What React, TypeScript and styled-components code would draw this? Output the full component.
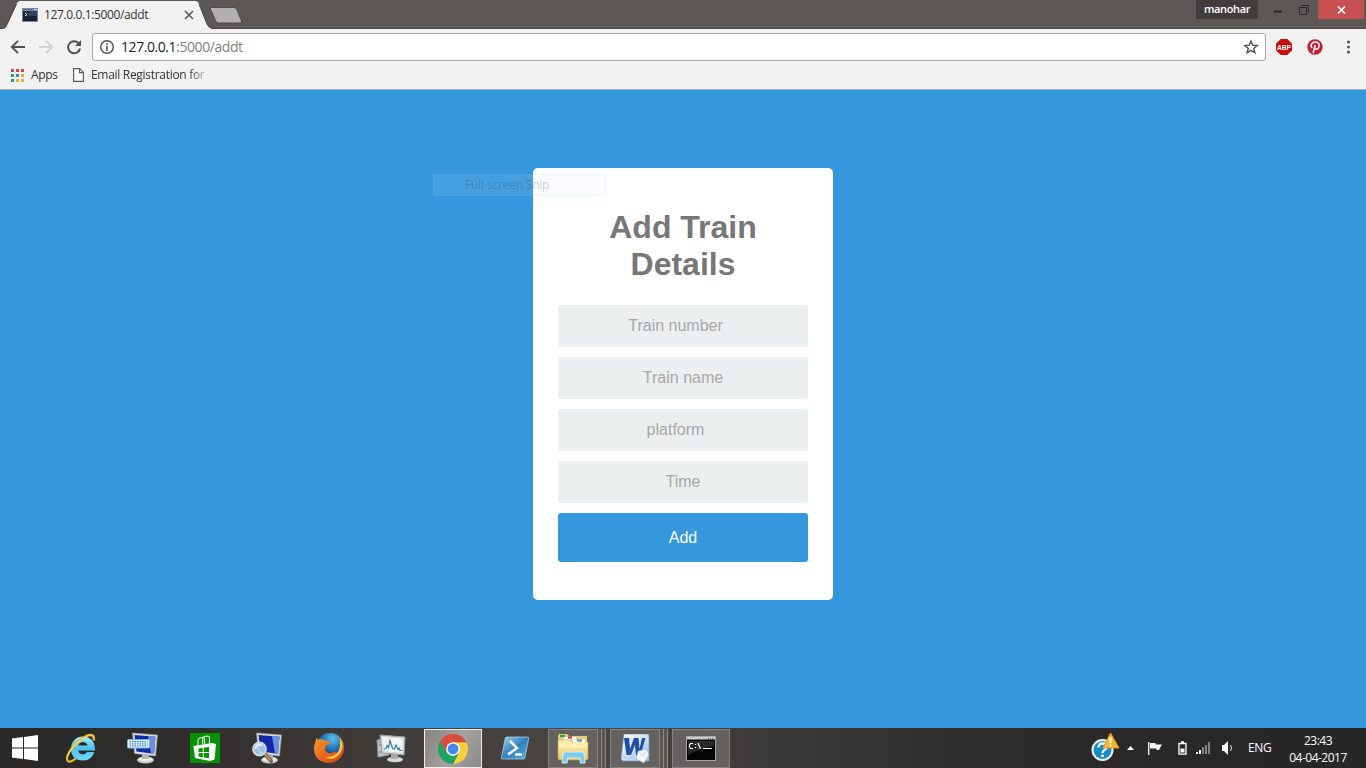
import React from 'react';
import styled, { createGlobalStyle } from 'styled-components';

const ui = `"Open Sans", "Noto Sans", sans-serif`;
const arial = `"Liberation Sans", Arial, sans-serif`;

const GlobalStyle = createGlobalStyle`
  *, *::before, *::after { box-sizing: border-box; }
  html, body { margin: 0; padding: 0; }
  body { width: 1366px; height: 768px; overflow: hidden; background: #3598dc; }
  svg { display: block; flex: none; }
`;

const Screen = styled.div`
  width: 1366px;
  height: 768px;
  display: flex;
  flex-direction: column;
`;

/* Browser window */

const TitleBar = styled.header`
  height: 29px;
  flex: none;
  display: flex;
  align-items: flex-start;
  background: #5b5856;
  box-shadow: inset 0 -1px #474443;
`;

const Tab = styled.div`
  width: 208px;
  height: 29px;
  position: relative;
  display: flex;
  align-items: center;
  padding-left: 22px;
`;

const TabShape = styled.svg`
  position: absolute;
  left: 0;
  top: 0;
`;

const TabIcon = styled.svg`
  position: relative;
`;

const Label = styled.span<{ $size?: number; $spacing?: number; $color?: string; $weight?: number }>`
  font-family: ${ui};
  font-size: ${p => p.$size ?? 12}px;
  font-weight: ${p => p.$weight ?? 400};
  letter-spacing: ${p => p.$spacing ?? 0}px;
  color: ${p => p.$color ?? '#333'};
  line-height: 18px;
  white-space: nowrap;
`;

const TabTitle = styled(Label)`
  position: relative;
  width: 139px;
  margin-left: 6px;
`;

const WindowControls = styled.div`
  margin-left: auto;
  display: flex;
  height: 19px;
`;

const UserBadge = styled.div`
  width: 62px;
  height: 19px;
  margin-right: 8px;
  display: flex;
  justify-content: center;
  background: #403d3c;
`;

const WindowButton = styled.div<{ $width: number; $close?: boolean }>`
  width: ${p => p.$width}px;
  height: 19px;
  display: flex;
  align-items: center;
  justify-content: center;
  background: ${p => (p.$close ? '#c75050' : 'transparent')};
`;

const Toolbar = styled.div`
  height: 36px;
  flex: none;
  display: flex;
  align-items: center;
  padding-left: 10px;
  background: #f2f2f2;
`;

const NavButtons = styled.div`
  width: 82px;
  display: flex;
  gap: 12px;
`;

const AddressBar = styled.div`
  width: 1174px;
  height: 28px;
  display: flex;
  align-items: center;
  padding: 0 6px;
  background: #fff;
  border: 1px solid #a9a9a9;
  border-radius: 3px;
`;

const Url = styled(Label)`
  flex: 1;
  margin-left: 6px;
`;

const UrlPath = styled.span`
  color: #808080;
`;

const Extensions = styled.div`
  display: flex;
  align-items: center;
  gap: 15px;
  margin-left: 10px;
`;

const BookmarksBar = styled.div`
  height: 25px;
  flex: none;
  display: flex;
  align-items: flex-start;
  padding: 1px 0 0 11px;
  background: #f2f2f2;
  border-bottom: 1px solid #b6b4b4;
`;

const Bookmark = styled.div<{ $gap: number; $width: number }>`
  display: flex;
  align-items: center;
  gap: ${p => p.$gap}px;
  width: ${p => p.$width}px;
  height: 18px;
`;

const FadingLabel = styled(Label)`
  width: 116px;
  mask-image: linear-gradient(to right, #000 84%, transparent 104%);
`;

/* Web page */

const Page = styled.main`
  height: 638px;
  flex: none;
  position: relative;
  display: flex;
  justify-content: center;
  align-items: flex-start;
  padding-top: 78px;
  background: #3598dc;
`;

const Card = styled.form`
  width: 300px;
  height: 432px;
  display: flex;
  flex-direction: column;
  padding: 41px 25px 0;
  gap: 10px;
  background: #fff;
  border-radius: 5px;
`;

const Heading = styled.h1`
  margin: 0 0 12px;
  font: bold 32px/37px ${arial};
  color: #777;
  text-align: center;
`;

const Field = styled.input<{ $trail?: number }>`
  width: 250px;
  height: 42px;
  padding: 0 ${p => p.$trail ?? 0}px 1px 0;
  border: 0;
  border-radius: 3px;
  background: #ebeff0;
  font: 16px ${arial};
  text-align: center;
  &::placeholder { color: #a6a8a9; opacity: 1; }
`;

const Submit = styled.button`
  width: 250px;
  height: 49px;
  padding: 0;
  border: 0;
  border-radius: 3px;
  background: #3598dc;
  color: #fff;
  font: 16px ${arial};
`;

const GhostMenu = styled.div`
  position: absolute;
  left: 433px;
  top: 84px;
  width: 173px;
  height: 22px;
  display: flex;
  align-items: center;
  padding-left: 31px;
  background: rgba(205, 215, 250, 0.11);
  border: 1px solid rgba(160, 190, 250, 0.1);
`;

/* Taskbar */

const Taskbar = styled.footer`
  height: 40px;
  flex: none;
  display: flex;
  align-items: center;
  background: linear-gradient(90deg, #292827 0, #302e2d 180px, #3b3836 330px, #454240 500px, #484543 620px, #3a3836 800px, #2d2c2b 980px, #272626 1366px);
`;

const Slot = styled.div<{ $width?: number }>`
  width: ${p => p.$width ?? 62}px;
  height: 40px;
  flex: none;
  display: flex;
  align-items: center;
  justify-content: center;
`;

const RunningApp = styled.div<{ $width: number; $active?: boolean; $margin?: number }>`
  width: ${p => p.$width}px;
  height: 39px;
  margin: 1px 0 0 ${p => p.$margin ?? 0}px;
  flex: none;
  display: flex;
  align-items: center;
  justify-content: center;
  border: 1px solid ${p => (p.$active ? '#eeeeed' : '#858280')};
  background: ${p => (p.$active ? 'linear-gradient(120deg, #858382, #a5a3a2 55%, #8b8988)' : '#64615f')};
`;

const StackEdge = styled.div`
  width: 4px;
  height: 39px;
  margin-top: 1px;
  flex: none;
  background: #595654;
  border-right: 1px solid #8c8987;
`;

const Tray = styled.div`
  margin-left: auto;
  display: flex;
  align-items: center;
  height: 40px;
`;

const TrayItem = styled.div<{ $width: number }>`
  width: ${p => p.$width}px;
  display: flex;
  align-items: center;
`;

const Clock = styled.div`
  width: 96px;
  display: flex;
  flex-direction: column;
  align-items: center;
  padding-top: 1px;
`;

const ClockLine = styled(Label)`
  line-height: 17px;
`;

const ConsoleFavicon = () => (
  <TabIcon width="16" height="14" viewBox="0 0 16 14">
    <rect width="16" height="14" fill="#7588a7" />
    <rect x="1" y="3" width="14" height="10" fill="#17202f" />
    <path d="M8 3h7v5H5z" fill="#33435b" />
    <path d="M3 5l2 1.500L3 8" fill="none" stroke="#fff" />
    <path d="M1 1.500h9" stroke="#52709c" />
    <path d="M12 1.500h3" stroke="#d8e2ef" />
  </TabIcon>
);

const AppsGrid = () => {
  const colors = ['#d7443e', '#d7443e', '#d7443e', '#2f9e60', '#3f7ee0', '#e9ad36', '#2f9e60', '#e9ad36', '#e9ad36'];
  return (
    <svg width="13" height="13" viewBox="0 0 13 13">
      {colors.map((c, i) => <rect key={i} x={(i % 3) * 5} y={Math.floor(i / 3) * 5} width="3" height="3" fill={c} />)}
    </svg>
  );
};

const IeIcon = () => (
  <svg width="32" height="32" viewBox="0 0 32 32">
    <defs><linearGradient id="ie" x2="0" y2="1"><stop stopColor="#a6ecff" /><stop offset=".5" stopColor="#4cc2f2" /><stop offset="1" stopColor="#6fdafc" /></linearGradient></defs>
    <path fillRule="evenodd" fill="url(#ie)" d="M18 4.500C10.500 4.500 6 10 6 17s4.500 11.500 12 11.500c5.500 0 9.800-3 11.200-8.500h-7.400c-.7 1.500-2 2.300-4 2.300-2.700 0-4.300-1.500-4.400-3.800H30C30.500 10 25.500 4.500 18 4.500zm-4.500 9c.4-2.200 2-3.500 4.500-3.500s4.100 1.300 4.500 3.500z" />
    <path d="M28.500 8.500c2.500-7-4.500-7.500-12-1.500C7 14-.5 25 2.800 29c1.700 1.500 4.500.3 8-2.300" fill="none" stroke="#f0bb20" strokeWidth="2.200" />
    <path d="M27.500 6c0-3.500-5-3-11 1.500C9 13 3.500 20 2.500 25" fill="none" stroke="#fde57a" strokeWidth=".8" />
  </svg>
);

const Monitor = ({ children }: { children?: React.ReactNode }) => (
  <svg width="32" height="32" viewBox="0 0 32 32">
    <ellipse cx="18.500" cy="28" rx="8.500" ry="3.500" fill="#c8cbc9" />
    <ellipse cx="18.500" cy="27.300" rx="7" ry="2.200" fill="#eceeec" />
    <path d="M15 22h7v5h-7z" fill="#b3b7b5" />
    <path d="M5.500 1l25 2-2 21-21-2.500z" fill="#d7dad9" stroke="#a0a4a6" strokeWidth=".6" />
    <path d="M7.500 3L28.500 4.700 27 21.800 9.500 19.500z" fill="#1229a8" />
    <path d="M21 4.100l7.500.6L27 21.800l-3-.4z" fill="#6f8fe6" />
    {children}
  </svg>
);

const KeyboardPcIcon = () => (
  <Monitor>
    <rect x=".5" y="7.500" width="22" height="8.500" rx="1" fill="#e8f4fc" stroke="#6fb2e0" />
    <path d="M2.500 9.700h18M2.500 11.800h18M2.500 13.900h18" stroke="#2988cc" strokeWidth="1.300" strokeDasharray="1.500 1" />
  </Monitor>
);

const SearchPcIcon = () => (
  <Monitor>
    <path d="M14 22l6 7" stroke="#7f624a" strokeWidth="4" strokeLinecap="round" />
    <path d="M14 22l5 6" stroke="#c9a178" strokeWidth="1.200" strokeLinecap="round" />
    <circle cx="8.500" cy="17" r="6.500" fill="#a9cdf2" fillOpacity=".9" stroke="#d3d9df" strokeWidth="1.800" />
    <path d="M4.500 17a4 4 0 017-3" fill="none" stroke="#eef7ff" strokeWidth="1.500" />
  </Monitor>
);

const PerfIcon = () => (
  <svg width="32" height="32" viewBox="0 0 32 32">
    <path d="M2 8l12-3v18L3 25z" fill="#bfc4c4" stroke="#888d8f" /><path d="M4 10h6M4 13h6M4 20h5" stroke="#777" />
    <ellipse cx="20" cy="27.500" rx="8" ry="2.800" fill="#d5d8d7" /><path d="M16 22h7v5h-7z" fill="#a6abaa" />
    <path d="M5 3l25 2-1 18-22-2z" fill="#d5d9d9" stroke="#959b9d" />
    <path d="M7 5l21 1.700-1 14-18-1.700z" fill="#f2f5f7" />
    <path d="M9 17l2-.5 1-3 1.500 2 1.500-7 2.500 8 2 .5 1.500-4 2 4.500 1-1.500 1 2.500h2" fill="none" stroke="#397eaf" strokeWidth="1.200" />
  </svg>
);

const StoreIcon = () => (
  <svg width="30" height="30" viewBox="0 0 30 30">
    <path d="M0 0h30v30H0z" fill="#079206" />
    <path d="M3.500 13l18.500-3 4 1-1.500 15.500L20 28 5 25z" fill="#fff" />
    <path d="M8 12.500V8q0-2.500 2-3l2.500-.5q2-.2 2 2v5M12.500 11.500V6q0-2 2-2.500l3-.5q2 0 2 2v5.500" fill="none" stroke="#d8eed8" strokeWidth="1.200" />
    <path d="M8.500 15.500l4.300-.6v4.200H8.500zm5.200-.7l5.300-.8v5.100h-5.300zM8.500 20h4.300v4.200l-4.300-.8zm5.200 0H19v5.300l-5.300-.9z" fill="#079206" />
  </svg>
);

const FirefoxIcon = () => (
  <svg width="32" height="32" viewBox="0 0 32 32">
    <defs>
      <radialGradient id="fxb" cx=".6" cy=".2"><stop stopColor="#55c3ec" /><stop offset="1" stopColor="#17559f" /></radialGradient>
      <linearGradient id="fxo" x2="1" y2="1"><stop stopColor="#f3a12b" /><stop offset=".5" stopColor="#e66a1d" /><stop offset="1" stopColor="#cf3d17" /></linearGradient>
    </defs>
    <circle cx="17" cy="15" r="14" fill="url(#fxb)" />
    <path fill="url(#fxo)" d="M3 6c1 1 2 1.500 3 1.500 2-1 4-.5 6 1l4 1c2 1 1 2.500-1 3l-2 1c-1 1 0 2-1 3 0 5 6 6 9 3 3 0 3 1 1 3 4-1 6-5 5-10 1-5-2-8-5-9 7 2 9.500 7 9 14-1 8-7 13.500-15 13.500S1 26 1 17C1 12 3 10 3 6z" />
    <path d="M27 6c4 6 3 12-1 17-4 4-9 5-14 2 9 1 16-5 15-14 .5-2 0-4 0-5z" fill="#f8c642" />
  </svg>
);

const ChromeIcon = () => (
  <svg width="30" height="30" viewBox="0 0 48 48">
    <path d="M24 13h21.300A24 24 0 0124 48l9.500-18.500z" fill="#fbcf3f" />
    <path d="M3.200 12l11.300 17.500L24 35l9.500-5.500L24 48A24 24 0 013.200 12z" fill="#1fa463" />
    <path d="M3.200 12A24 24 0 0145.300 13H24l-9.500 16.500z" fill="#dd4b3e" />
    <circle cx="24" cy="24" r="11" fill="#fff" /><circle cx="24" cy="24" r="8.700" fill="#4688f1" />
  </svg>
);

const PowerShellIcon = () => (
  <svg width="30" height="28" viewBox="0 0 30 28">
    <defs><linearGradient id="ps" x2="1" y2="1"><stop stopColor="#a6d7f0" /><stop offset=".5" stopColor="#3180bd" /><stop offset="1" stopColor="#5bb2df" /></linearGradient></defs>
    <path d="M7 3h21q1 0 .8 1l-4 20q-.2 1-1.200 1H2q-1 0-.7-1l4-20Q5.500 3 7 3z" fill="url(#ps)" stroke="#b2daf0" strokeWidth=".7" />
    <path d="M10 7l7 7-9 6.500" fill="none" stroke="#fff" strokeWidth="2.500" /><path d="M15 20.500h7" stroke="#fff" strokeWidth="2.400" />
  </svg>
);

const ExplorerIcon = () => (
  <svg width="34" height="32" viewBox="0 0 34 32">
    <defs><linearGradient id="folder" x2="0" y2="1"><stop stopColor="#fff3b8" /><stop offset="1" stopColor="#e7c866" /></linearGradient></defs>
    <path d="M2 3l1-2h8l2 2h18v10H3z" fill="#e8cf7b" />
    <path d="M4 3h5" stroke="#22a84b" strokeWidth="2.400" /><path d="M8 5.500h12" stroke="#fff" strokeWidth="3" /><path d="M12 4.500h4" stroke="#d9432b" strokeWidth="2.400" />
    <path d="M2 7h12l2 2h16v16q0 2-2 2H4q-2 0-2-2z" fill="url(#folder)" stroke="#c6a54a" strokeWidth=".6" />
    <path d="M17 8h12" stroke="#fff" strokeWidth="3" /><path d="M21 7.500h5" stroke="#3a9ad1" strokeWidth="2.200" />
    <path d="M3 11h28v4H3z" fill="#fff0b0" />
    <path d="M6 30l1-9q.2-2 2-2h17q2 0 2.200 2l1 9h-5v-5H11.500l-.5 5z" fill="#7fcbea" stroke="#d0f0fc" strokeWidth="1" />
  </svg>
);

const WordIcon = () => (
  <svg width="30" height="30" viewBox="0 0 30 30">
    <defs><linearGradient id="wd" x2="1" y2="1"><stop stopColor="#fff" /><stop offset="1" stopColor="#9fc4e9" /></linearGradient></defs>
    <path d="M4 0h23q2 0 2 2v25H3q-1 0-2-2z" fill="url(#wd)" stroke="#729fcb" strokeWidth=".7" />
    <path d="M4 5h7M4 21v3h10" fill="none" stroke="#acc8e4" />
    <path d="M4 4h5l1 11L14 4h4.500l1 11L22 4h3.500l-5 17H16l-1-10-4 10H6.500z" fill="#1d50a5" />
    <path d="M18 17l9-2 2 6-5 8-8-4z" fill="#f5f9fd" stroke="#84a9cc" strokeWidth=".6" />
    <path d="M18 17l5 5 4-7" fill="none" stroke="#b3cbe0" strokeWidth=".8" />
  </svg>
);

const CmdIcon = () => (
  <svg width="30" height="25" viewBox="0 0 30 25">
    <rect x=".5" y=".5" width="29" height="24" fill="#050505" stroke="#a6a6a6" /><path d="M1 1h28v2.500H1z" fill="#ccc" />
    <path d="M22 2.500h5" stroke="#555" strokeDasharray="1 1" /><path d="M2 5h26v5Q15 12 2 19z" fill="#2a2a2a" />
    <path d="M7 7.500H4.500L3.500 9v2l1 1.500H7M9.500 8v1M9.500 11v1M12 7l2.500 6M17 12.500h9" fill="none" stroke="#fff" strokeWidth="1.200" />
  </svg>
);

const HelpAlertIcon = () => (
  <svg width="29" height="30" viewBox="0 0 29 30">
    <circle cx="11.500" cy="17" r="11" fill="#e9f6fc" /><circle cx="11.500" cy="17" r="9" fill="#168bc2" />
    <path d="M7.500 14.500q0-4 4-4t4 3.500q0 2-2 3t-2 3" fill="none" stroke="#fff" strokeWidth="2.400" /><path d="M10.200 21.500h2.600V24h-2.600z" fill="#fff" />
    <path d="M19.500 0l8.500 15H12z" fill="#f6b52e" stroke="#e99a1b" strokeWidth="1" strokeLinejoin="round" />
    <path d="M19.500 4.500v5.500M19.500 11.500v2" stroke="#fff" strokeWidth="2" />
  </svg>
);

export default function App() {
  return (
    <Screen>
      <GlobalStyle />
      <TitleBar>
        <Tab>
          <TabShape width="214" height="29" viewBox="0 0 214 29">
            <path d="M0 29c4 0 6-1 7-4L16.500 4q1.200-3 4-3H195q3 0 4 3l8 20q2 5 7 5z" fill="#f2f2f2" />
            <path d="M0 28.500c4 0 6-1 7-4L16.500 4M199 4l8 20q2 4.500 7 4.500" stroke="#474443" fill="none" />
          </TabShape>
          <ConsoleFavicon />
          <TabTitle $spacing={-0.38}>127.0.0.1:5000/addt</TabTitle>
          <TabIcon width="12" height="12" viewBox="0 0 12 12"><path d="M2 2l8 8M10 2L2 10" stroke="#5a5a5a" strokeWidth="1.600" /></TabIcon>
        </Tab>
        <svg width="36" height="29" viewBox="0 0 36 29">
          <path d="M3.500 7.500H26q2 0 2.800 2l4.700 11.500q.6 2-1 2H10.500q-2 0-2.800-2L2.500 9q-.5-1.500 1-1.500z" fill="#b2b0af" stroke="#4d4a49" />
        </svg>
        <WindowControls>
          <UserBadge><Label $color="#fff" $size={11} $spacing={-0.35} $weight={600}>manohar</Label></UserBadge>
          <WindowButton $width={24}><svg width="8" height="7"><path d="M0 5.500h8" stroke="#282726" strokeWidth="2" /></svg></WindowButton>
          <WindowButton $width={28}><svg width="10" height="10" viewBox="0 0 10 10"><path d="M.5 2.500h7v7h-7zM2 .5h7.500V8" fill="none" stroke="#282726" /></svg></WindowButton>
          <WindowButton $width={46} $close><svg width="9" height="8" viewBox="0 0 9 8"><path d="M1 .5l7 7M8 .5l-7 7" stroke="#fff" strokeWidth="1.600" /></svg></WindowButton>
          <WindowButton $width={2} />
        </WindowControls>
      </TitleBar>

      <Toolbar>
        <NavButtons>
          <svg width="16" height="16" viewBox="0 0 16 16"><path d="M15 8H2M8 1.800L1.800 8 8 14.200" fill="none" stroke="#505050" strokeWidth="1.900" /></svg>
          <svg width="16" height="16" viewBox="0 0 16 16"><path d="M1 8h13M8 1.800L14.200 8 8 14.200" fill="none" stroke="#d2d2d2" strokeWidth="1.900" /></svg>
          <svg width="16" height="16" viewBox="0 0 16 16"><path d="M12.600 4.300A6 6 0 1014 9.500" fill="none" stroke="#505050" strokeWidth="2" /><path d="M15 1v6H9z" fill="#505050" /></svg>
        </NavButtons>
        <AddressBar>
          <svg width="16" height="16" viewBox="0 0 16 16"><circle cx="8" cy="8" r="6.300" fill="none" stroke="#505050" strokeWidth="1.400" /><path d="M8 7v5M8 4v1.700" stroke="#505050" strokeWidth="1.600" /></svg>
          <Url $size={14} $spacing={-0.43} $color="#202020">127.0.0.1<UrlPath>:5000/addt</UrlPath></Url>
          <svg width="16" height="16" viewBox="0 0 16 16"><path d="M8 2l1.700 4.200 4.500.3-3.500 2.900 1.200 4.400L8 11.300l-3.900 2.500 1.200-4.400-3.500-2.900 4.500-.3z" fill="none" stroke="#505050" strokeWidth="1.400" /></svg>
        </AddressBar>
        <Extensions>
          <svg width="16" height="16" viewBox="0 0 16 16">
            <path d="M4.700 0h6.600L16 4.700v6.600L11.300 16H4.700L0 11.300V4.700z" fill="#c90b0b" />
            <text x="8" y="10.800" textAnchor="middle" fontFamily="Liberation Sans, sans-serif" fontSize="7.500" fontWeight="bold" fill="#fff" textLength="14" lengthAdjust="spacingAndGlyphs">ABP</text>
          </svg>
          <svg width="16" height="16" viewBox="0 0 16 16"><circle cx="8" cy="8" r="7.700" fill="#c51f36" /><path d="M6.200 14l2-8M5 9C2.600 5.500 5.500 3 8.300 3c3 0 4.500 2.200 3.700 4.700-.9 3-3.700 3.300-4.500 1.600" fill="none" stroke="#fff" strokeWidth="1.500" /></svg>
          <svg width="20" height="16" viewBox="0 0 20 16"><g fill="#505050"><circle cx="10.500" cy="3" r="1.500" /><circle cx="10.500" cy="8" r="1.500" /><circle cx="10.500" cy="13" r="1.500" /></g></svg>
        </Extensions>
      </Toolbar>

      <BookmarksBar>
        <Bookmark $gap={7} $width={62}><AppsGrid /><Label $spacing={-0.3}>Apps</Label></Bookmark>
        <Bookmark $gap={7} $width={136}>
          <svg width="11" height="14" viewBox="0 0 11 14"><path d="M.6.600h6l3.800 3.800v9H.6zM6.500.600v4h4" fill="#fafafa" stroke="#555" strokeWidth="1.100" /></svg>
          <FadingLabel $spacing={-0.3}>Email Registration for</FadingLabel>
        </Bookmark>
      </BookmarksBar>

      <Page>
        <Card>
          <Heading>Add Train Details</Heading>
          <Field placeholder="Train number" $trail={15} />
          <Field placeholder="Train name" />
          <Field placeholder="platform" $trail={15} />
          <Field placeholder="Time" />
          <Submit type="button">Add</Submit>
        </Card>
        <GhostMenu><Label $spacing={-0.25} $color="rgba(40, 50, 60, 0.24)">Full-screen Snip</Label></GhostMenu>
      </Page>

      <Taskbar>
        <Slot $width={50}>
          <svg width="26" height="26" viewBox="0 0 26 26"><path d="M0 3.500L11 2v10.500H0zM12 1.900L26 0v12.500H12zM0 13.500h11V24L0 22.500zM12 13.500h14V26l-14-1.900z" fill="#fff" /></svg>
        </Slot>
        <Slot><IeIcon /></Slot>
        <Slot><KeyboardPcIcon /></Slot>
        <Slot><StoreIcon /></Slot>
        <Slot><SearchPcIcon /></Slot>
        <Slot><FirefoxIcon /></Slot>
        <Slot><PerfIcon /></Slot>
        <RunningApp $width={58} $margin={2} $active><ChromeIcon /></RunningApp>
        <Slot $width={66}><PowerShellIcon /></Slot>
        <RunningApp $width={50}><ExplorerIcon /></RunningApp>
        <StackEdge /><StackEdge />
        <RunningApp $width={50} $margin={4}><WordIcon /></RunningApp>
        <StackEdge /><StackEdge />
        <RunningApp $width={58} $margin={4}><CmdIcon /></RunningApp>
        <Tray>
          <TrayItem $width={36}><HelpAlertIcon /></TrayItem>
          <TrayItem $width={21}><svg width="7" height="4"><path d="M0 4l3.500-4L7 4z" fill="#fff" /></svg></TrayItem>
          <TrayItem $width={30}><svg width="15" height="14" viewBox="0 0 15 14"><path d="M.7 1v13" stroke="#eee" strokeWidth="1.400" /><path d="M2 2h5.500v1.500H14L12.500 6 11 9H8.500V7.500H2z" fill="#fff" /></svg></TrayItem>
          <TrayItem $width={18}><svg width="9" height="14" viewBox="0 0 9 14"><path d="M1 2.500h7v10.700H1zM3 1h3" fill="none" stroke="#fff" strokeWidth="1.300" /><path d="M2.500 7.500h4v4h-4z" fill="#fff" /></svg></TrayItem>
          <TrayItem $width={25}><svg width="14" height="12" viewBox="0 0 14 12"><path d="M0 10h2v2H0zM3 8h2v4H3z" fill="#fff" /><path d="M6 5h2v7H6zM9 3h2v9H9zM12 0h2v12h-2z" fill="#858382" /></svg></TrayItem>
          <TrayItem $width={27}><svg width="13" height="14" viewBox="0 0 13 14"><path d="M1 4h2l4-4v14l-4-4H1z" fill="#fff" /><path d="M9.500 4q2 3 0 6" fill="none" stroke="#ddd" /></svg></TrayItem>
          <TrayItem $width={22}><Label $color="#fff" $spacing={-0.3}>ENG</Label></TrayItem>
          <Clock><ClockLine $color="#fff" $spacing={-0.5}>23:43</ClockLine><ClockLine $color="#fff" $spacing={-0.5}>04-04-2017</ClockLine></Clock>
        </Tray>
      </Taskbar>
    </Screen>
  );
}
